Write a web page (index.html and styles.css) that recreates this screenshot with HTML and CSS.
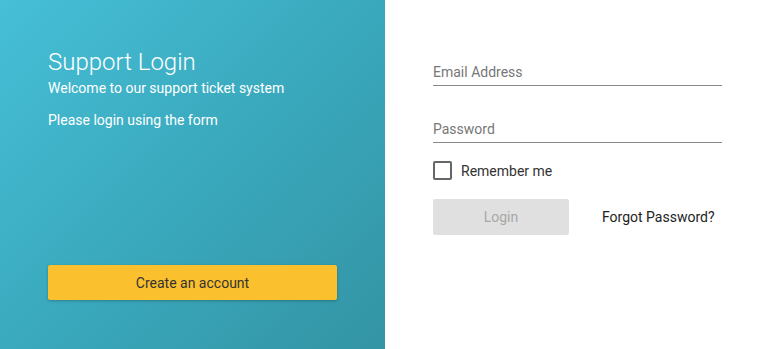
FILE: index.html
```html
<!DOCTYPE html>
<html>
<head>
<meta charset="utf-8">
<link rel="stylesheet" href="styles.css">
</head>
<body>
<div class="page">
  <section class="intro">
    <div class="intro-text">
      <h1 class="title">Support Login</h1>
      <p class="subtitle">Welcome to our support ticket system</p>
      <p class="note">Please login using the form</p>
    </div>
    <button class="create-btn">Create an account</button>
  </section>
  <section class="form">
    <label class="field">
      <span class="field-label">Email Address</span>
    </label>
    <label class="field">
      <span class="field-label">Password</span>
    </label>
    <label class="remember">
      <span class="checkbox"></span>
      <span class="remember-text">Remember me</span>
    </label>
    <div class="actions">
      <button class="login-btn">Login</button>
      <a class="forgot">Forgot Password?</a>
    </div>
  </section>
</div>
</body>
</html>
```
FILE: styles.css
```css
* { box-sizing: border-box; }
html, body { margin: 0; padding: 0; background: #fff; }
body { font-family: Roboto, "Noto Sans", sans-serif; width: 770px; height: 349px; overflow: hidden; }
.page { display: flex; height: 349px; }
.intro {
  width: 385px;
  height: 349px;
  background: linear-gradient(135deg, #46bfd7 0%, #3aa9bd 50%, #3394a4 100%);
  padding: 48px 48px 49px 48px;
  display: flex;
  flex-direction: column;
  justify-content: space-between;
  color: #fff;
}
.title { margin: 0; font-size: 24px; font-weight: 300; line-height: 29px; }
.subtitle { margin: 3px 0 0; font-size: 14px; font-weight: 400; line-height: 16px; }
.note { margin: 16px 0 0; font-size: 14px; font-weight: 400; line-height: 16px; }
.create-btn {
  width: 289px;
  height: 35px;
  border: none;
  border-radius: 2px;
  background: #fbc02d;
  color: #333;
  font-family: Roboto, sans-serif;
  font-size: 14px;
  box-shadow: 0 1px 3px rgba(0,0,0,0.25);
  padding: 0;
}
.form {
  flex: 1;
  padding: 64px 48px 0 48px;
  display: flex;
  flex-direction: column;
}
.field {
  display: block;
  width: 289px;
  border-bottom: 1px solid #8a8a8a;
  padding-bottom: 4px;
}
.field + .field { margin-top: 35px; }
.field-label { font-size: 14px; color: #777; line-height: 17px; display: block; }
.remember { display: flex; align-items: center; margin-top: 18px; }
.checkbox { width: 19px; height: 19px; border: 2px solid #666; border-radius: 2px; }
.remember-text { margin-left: 9px; font-size: 14px; color: #333; }
.actions { display: flex; align-items: center; margin-top: 19px; }
.login-btn {
  width: 136px;
  height: 36px;
  border: none;
  border-radius: 2px;
  background: #e0e0e0;
  color: #a8a8a8;
  font-family: Roboto, sans-serif;
  font-size: 14px;
  padding: 0;
}
.forgot { margin-left: 33px; font-size: 14px; color: #222; }
```
